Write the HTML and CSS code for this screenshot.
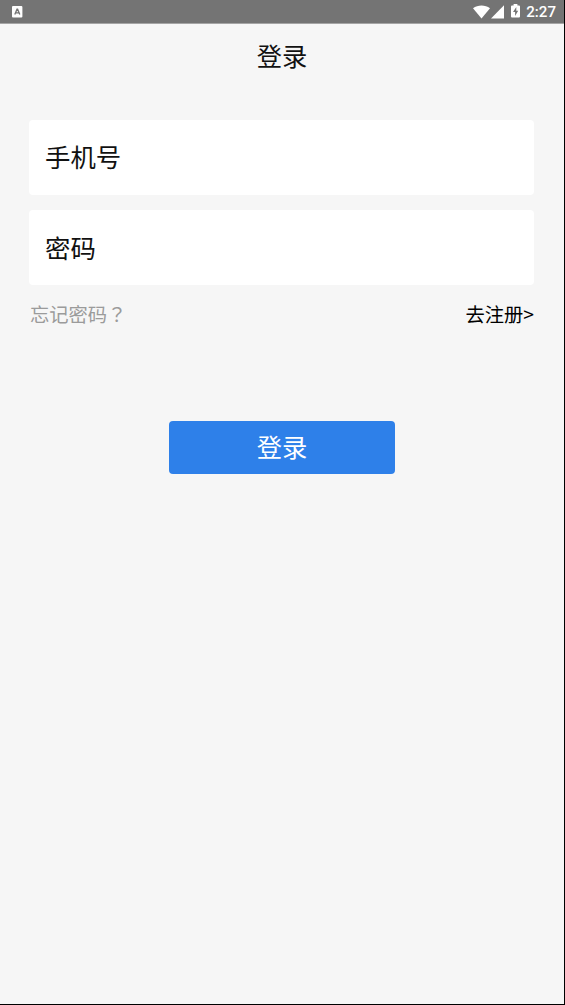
FILE: index.html
```html
<!DOCTYPE html>
<html lang="zh-CN">
<head>
<meta charset="utf-8">
<title>登录</title>
<link rel="stylesheet" href="styles.css">
</head>
<body>
<div class="screen">
  <header class="status">
    <svg class="status-app" width="11" height="12" viewBox="0 0 11 12"><rect width="10.4" height="11.4" rx="1" fill="#fff"/><path d="M2.8 8.6 5 3.2h.6l2.2 5.4M3.7 6.9h3.2" fill="none" stroke="#747474" stroke-width="1.3"/></svg>
    <div class="status-right">
      <svg width="17" height="14" viewBox="0 0 17 14"><path d="M0 3.200C4.800-.5 12.200-.5 17 3.200L8.500 13.500z" fill="#fff"/></svg>
      <svg class="signal" width="13" height="14" viewBox="0 0 13 14"><path d="M13 .2V13.500H0z" fill="#fff"/></svg>
      <svg class="battery" width="9" height="14" viewBox="0 0 9 14"><path d="M2.600 0h3.800v1.500H8q1 0 1 1v10q0 1-1 1H1q-1 0-1-1v-10q0-1 1-1h1.600z" fill="#fff"/><path d="M5.300 3 2 8.100h2.100V12L7.200 6.800H5.300z" fill="#747474"/></svg>
      <span class="time">2:27</span>
    </div>
  </header>
  <h1 class="title">登录</h1>
  <main class="form">
    <div class="field">手机号</div>
    <div class="field">密码</div>
    <div class="links"><a class="forgot">忘记密码<span class="mark" lang="zh-Hant">？</span></a><a class="register">去注册&gt;</a></div>
    <button class="submit">登录</button>
  </main>
</div>
</body>
</html>
```
FILE: styles.css
```css
* { box-sizing: border-box; }
body {
  margin: 0;
  background: #000;
  font-family: "Noto Sans CJK SC", sans-serif;
  color: #111;
}
.screen {
  width: 564px;
  height: 1004px;
  background: #f6f6f6;
}
.status {
  height: 24px;
  padding: 0 8px 0 12px;
  display: flex;
  align-items: center;
  justify-content: space-between;
  background: #747474;
  border-bottom: 1px solid #a5a5a5;
}
.status svg { display: block; }
.status-right { display: flex; align-items: center; }
.signal { margin-left: 1.500px; }
.battery { margin: -2px 0 0 7px; }
.time {
  margin-left: 6px;
  padding-top: 2px;
  font: 500 15.100px/23px Roboto, sans-serif;
  color: #fff;
}
.title {
  margin: 0;
  height: 64px;
  font-size: 25.300px;
  font-weight: 400;
  line-height: 62px;
  text-align: center;
}
.form {
  padding: 32px 30px 0 29px;
  display: flex;
  flex-direction: column;
}
.field {
  height: 75px;
  margin-bottom: 15.400px;
  padding-left: 16px;
  border-radius: 4px;
  background: #fff;
  font-size: 25.400px;
  line-height: 74px;
}
.field:first-child { line-height: 73px; }
.links {
  display: flex;
  justify-content: space-between;
  height: 30px;
  margin-top: -1.800px;
  font-size: 19.300px;
  line-height: 30px;
}
.forgot { padding-left: 1px; color: #9b9b9b; }
.mark { font-family: "Noto Sans CJK TC", sans-serif; }
.register { color: #000; }
.submit {
  align-self: center;
  width: 226px;
  height: 53px;
  margin-top: 92px;
  padding: 0 0 2px 1px;
  border: 0;
  border-radius: 4px;
  background: #2e80e9;
  color: #fff;
  font-family: inherit;
  font-size: 25.300px;
  line-height: 49px;
}
```
